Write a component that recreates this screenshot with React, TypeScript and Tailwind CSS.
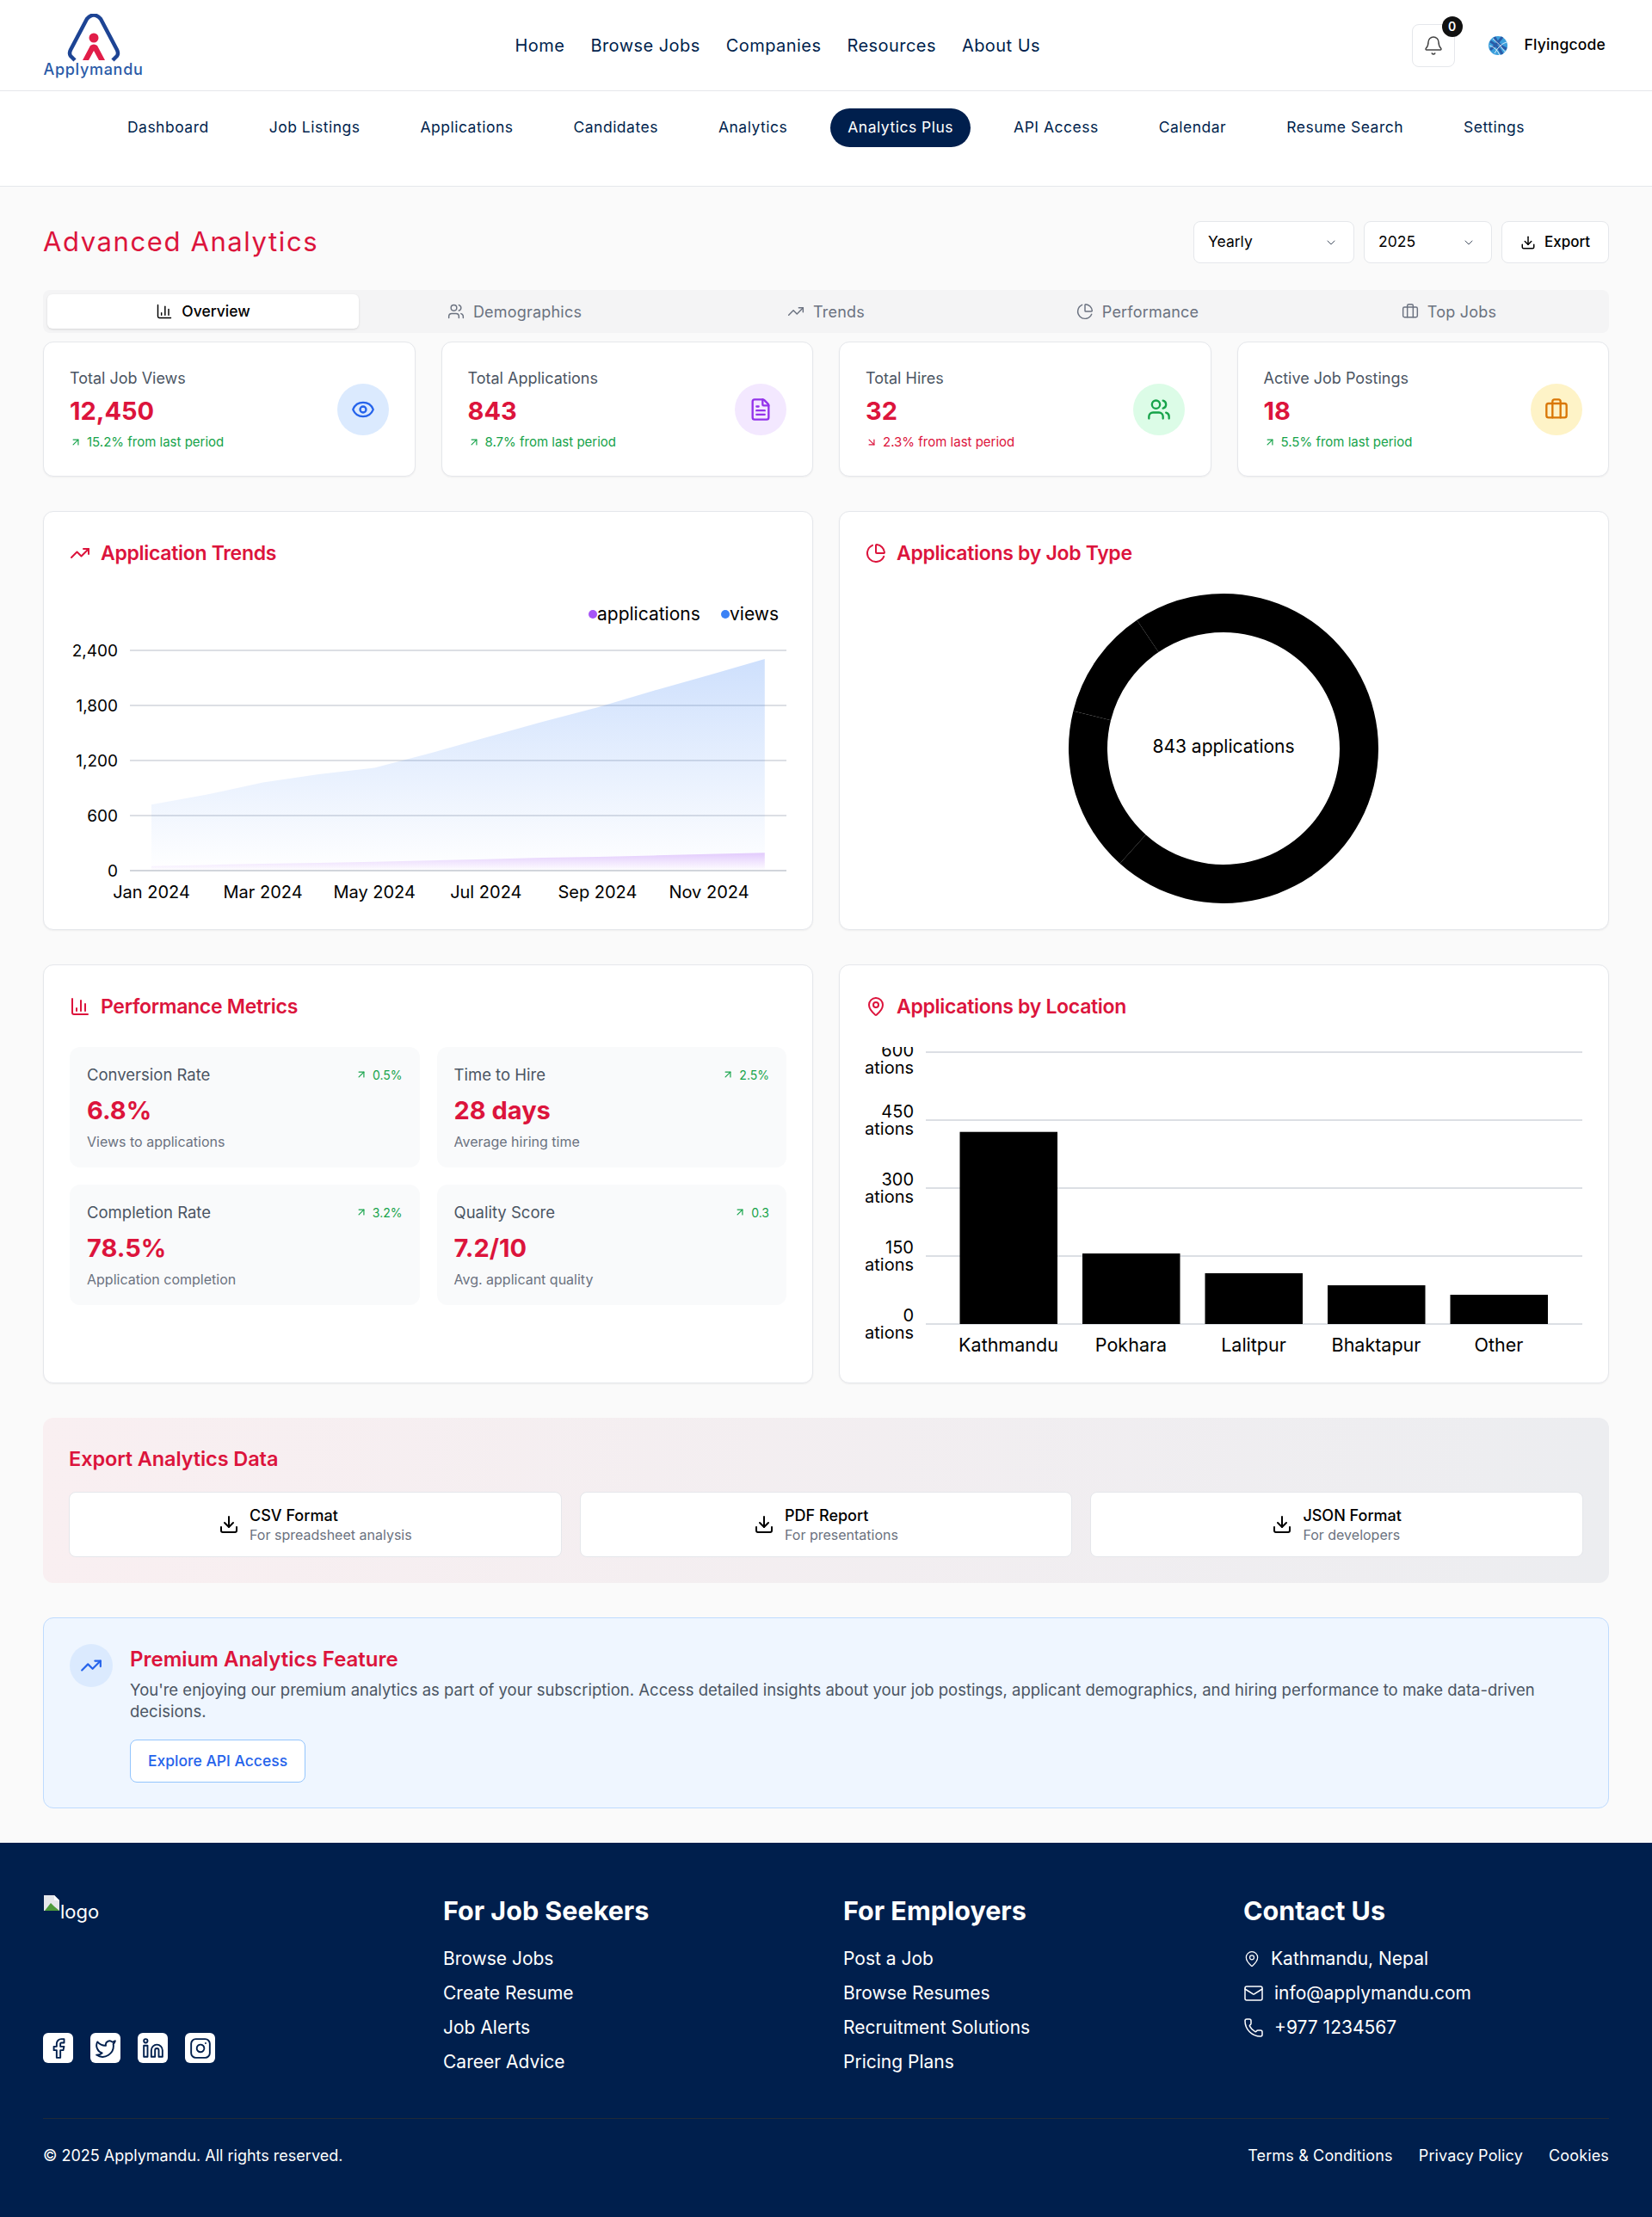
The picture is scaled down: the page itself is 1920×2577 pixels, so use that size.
import {
  ArrowDownRight,
  ArrowUpRight,
  Bell,
  Briefcase,
  ChartColumn,
  ChartPie,
  ChevronDown,
  Download,
  Eye,
  Facebook,
  FileText,
  Instagram,
  Linkedin,
  Mail,
  MapPin,
  Phone,
  TrendingUp,
  Twitter,
  Users,
} from "lucide-react";

const mainNav = ["Home", "Browse Jobs", "Companies", "Resources", "About Us"];
const subNav = [
  "Dashboard",
  "Job Listings",
  "Applications",
  "Candidates",
  "Analytics",
  "Analytics Plus",
  "API Access",
  "Calendar",
  "Resume Search",
  "Settings",
];

const tabs = [
  { label: "Overview", icon: ChartColumn },
  { label: "Demographics", icon: Users },
  { label: "Trends", icon: TrendingUp },
  { label: "Performance", icon: ChartPie },
  { label: "Top Jobs", icon: Briefcase },
];

const stats = [
  { label: "Total Job Views", value: "12,450", change: "15.2% from last period", up: true, icon: Eye, circle: "bg-[#dbeafe]", color: "text-[#2563eb]" },
  { label: "Total Applications", value: "843", change: "8.7% from last period", up: true, icon: FileText, circle: "bg-[#f3e8ff]", color: "text-[#9333ea]" },
  { label: "Total Hires", value: "32", change: "2.3% from last period", up: false, icon: Users, circle: "bg-[#dcfce7]", color: "text-[#16a34a]" },
  { label: "Active Job Postings", value: "18", change: "5.5% from last period", up: true, icon: Briefcase, circle: "bg-[#fef3c7]", color: "text-[#d97706]" },
];

const metrics = [
  { label: "Conversion Rate", change: "0.5%", value: "6.8%", sub: "Views to applications" },
  { label: "Time to Hire", change: "2.5%", value: "28 days", sub: "Average hiring time" },
  { label: "Completion Rate", change: "3.2%", value: "78.5%", sub: "Application completion" },
  { label: "Quality Score", change: "0.3", value: "7.2/10", sub: "Avg. applicant quality" },
];

const exportsList = [
  { title: "CSV Format", sub: "For spreadsheet analysis" },
  { title: "PDF Report", sub: "For presentations" },
  { title: "JSON Format", sub: "For developers" },
];

const footerCols = [
  { title: "For Job Seekers", links: ["Browse Jobs", "Create Resume", "Job Alerts", "Career Advice"] },
  { title: "For Employers", links: ["Post a Job", "Browse Resumes", "Recruitment Solutions", "Pricing Plans"] },
];

const viewsData = [720, 830, 960, 1050, 1120, 1280, 1450, 1620, 1780, 1960, 2130, 2306];
const appsData = [50, 62, 75, 85, 95, 110, 125, 140, 150, 165, 180, 195];
const months = ["Jan 2024", "Mar 2024", "May 2024", "Jul 2024", "Sep 2024", "Nov 2024"];
const locations = [
  { name: "Kathmandu", top: 98.7 },
  { name: "Pokhara", top: 240 },
  { name: "Lalitpur", top: 263 },
  { name: "Bhaktapur", top: 277 },
  { name: "Other", top: 288 },
];

const cardClass = "px-[30px] pt-[30px] bg-white border border-gray-200 rounded-xl shadow-[0_1px_2px_rgba(0,0,0,0.05)]";

function areaPath(data: number[]) {
  const pts = data.map((v, i) => `${95 + i * 64.8},${322 - (v * 64) / 600}`);
  return `M95,322 L${pts.join(" L")} L807.8,322 Z`;
}

function Logo() {
  return (
    <div className="flex flex-col items-center w-[117px]">
      <svg width="62" height="56" viewBox="0 0 62 56">
        <path
          d="M9 54 L4 49 Q2 46 4 42 L23 6 Q31 -3 39 6 L58 42 Q60 46 58 49 L53 54"
          fill="none"
          stroke="#1d4494"
          strokeWidth="4.5"
          strokeLinejoin="round"
        />
        <circle cx="31" cy="28" r="5.5" fill="#e11d48" />
        <path d="M18 54 L27 37 Q31 34 35 37 L44 54 L37 54 L31 43 L25 54 Z" fill="#e11d48" />
      </svg>
      <span className="text-[18px] leading-[18px] tracking-[0.7px] text-[#2a5ba8] font-medium">Applymandu</span>
    </div>
  );
}

function Avatar() {
  return (
    <svg width="24" height="24" viewBox="0 0 24 24">
      <circle cx="12" cy="12" r="11" fill="#3b9fdc" />
      <path d="M3 7 Q12 12 17 22 M8 2 Q12 12 22 16 M17 2 Q12 9 3 17" fill="none" stroke="#2a5ca8" strokeWidth="3" />
      <path d="M6 4 Q14 10 20 19 M2 12 Q10 14 14 23 M22 8 Q14 10 8 21" fill="none" stroke="#ffffff" strokeWidth="0.8" />
    </svg>
  );
}

function Select({ label, width }: { label: string; width: string }) {
  return (
    <div className={`${width} h-[49px] flex items-center justify-between pl-4 pr-[18px] bg-white border border-gray-200 rounded-lg text-[17.5px] text-black`}>
      {label}
      <ChevronDown size={16} className="text-gray-600" strokeWidth={1.5} />
    </div>
  );
}

function CardTitle({ icon: Icon, title }: { icon: typeof Eye; title: string }) {
  return (
    <div className="flex items-center gap-3 h-9 text-[#dc143c]">
      <Icon size={24} strokeWidth={2} />
      <h3 className="text-[23px] font-semibold tracking-[-0.3px]">{title}</h3>
    </div>
  );
}

function TrendsChart() {
  return (
    <svg width="833" height="360" className="mt-[29px] block">
      <defs>
        <linearGradient id="viewsFill" x1="0" y1="0" x2="0" y2="1">
          <stop offset="0%" stopColor="#3b82f6" stopOpacity="0.25" />
          <stop offset="100%" stopColor="#3b82f6" stopOpacity="0" />
        </linearGradient>
        <linearGradient id="appsFill" x1="0" y1="0" x2="0" y2="1">
          <stop offset="0%" stopColor="#a855f7" stopOpacity="0.3" />
          <stop offset="100%" stopColor="#a855f7" stopOpacity="0" />
        </linearGradient>
      </defs>
      <circle cx="608" cy="24" r="5" fill="#a855f7" />
      <text x="613" y="31" fontSize="21" fill="#000">applications</text>
      <circle cx="762" cy="24" r="5" fill="#3b82f6" />
      <text x="767" y="31" fontSize="21" fill="#000">views</text>
      {[66, 130, 194, 258, 322].map((y, i) => (
        <g key={y}>
          <line x1="70" x2="833" y1={y} y2={y} stroke="#d1d5db" strokeWidth={i === 4 ? 2 : 1.5} />
          <text x="56" y={y + 7} fontSize="19" textAnchor="end" fill="#000">
            {["2,400", "1,800", "1,200", "600", "0"][i]}
          </text>
        </g>
      ))}
      <path d={areaPath(viewsData)} fill="url(#viewsFill)" />
      <path d={areaPath(appsData)} fill="url(#appsFill)" />
      {months.map((m, i) => (
        <text key={m} x={95 + i * 129.6} y={354} fontSize="20" textAnchor="middle" fill="#000">
          {m}
        </text>
      ))}
    </svg>
  );
}

// slices meet at these angles, the seams between them show as hairlines
const sliceAngles = [0, 222, 284, 326, 360];

function arcPath(from: number, to: number) {
  const p = (r: number, a: number) => {
    const t = (a * Math.PI) / 180;
    return `${416 + r * Math.sin(t)} ${180 - r * Math.cos(t)}`;
  };
  const large = to - from > 180 ? 1 : 0;
  return `M${p(180, from)} A180 180 0 ${large} 1 ${p(180, to)} L${p(135, to)} A135 135 0 ${large} 0 ${p(135, from)} Z`;
}

function DonutChart() {
  return (
    <svg width="833" height="360" className="mt-[29px] block">
      {sliceAngles.slice(0, -1).map((a, i) => (
        <path key={a} d={arcPath(a, sliceAngles[i + 1])} fill="#000" />
      ))}
      <text x="416" y="185" fontSize="21" textAnchor="middle" fill="#000">843 applications</text>
    </svg>
  );
}

function LocationChart() {
  return (
    <svg width="833" height="360" className="mt-[29px] block">
      {[6, 85, 164, 243, 322].map((y, i) => {
        // the top tick label sits lower than the others in the chart
        const shift = i === 0 ? 8 : 0;
        return (
          <g key={y}>
            <line x1="70" x2="833" y1={y} y2={y} stroke="#d1d5db" strokeWidth="1.5" />
            <text x="56" y={y - 3 + shift} fontSize="20" textAnchor="end" fill="#000">
              {["600", "450", "300", "150", "0"][i]}
            </text>
            <text x="56" y={y + 17 + shift} fontSize="20" textAnchor="end" fill="#000">applications</text>
          </g>
        );
      })}
      {locations.map((l, i) => (
        <g key={l.name}>
          <rect x={109.5 + i * 142.5} y={l.top} width="113.5" height={322 - l.top} fill="#000" />
          <text x={166 + i * 142.5} y={354} fontSize="21.5" textAnchor="middle" fill="#000">{l.name}</text>
        </g>
      ))}
    </svg>
  );
}

export default function App() {
  return (
    <div className="min-h-[2577px] bg-[#fafafa] font-[family-name:Inter,sans-serif]">
      <header className="h-[106px] flex items-center justify-between pl-[50px] pr-[54px] bg-white border-b border-gray-200">
        <Logo />
        <nav className="flex gap-[30px] text-[20px] tracking-[0.45px] text-[#001f4d]">
          {mainNav.map((n) => (
            <span key={n}>{n}</span>
          ))}
        </nav>
        <div className="flex items-center">
          <div className="relative w-[50px] h-[50px] flex items-center justify-center border border-gray-200 rounded-lg bg-white">
            <Bell size={24} strokeWidth={1.5} className="text-[#444]" />
            <span className="absolute right-[-10px] top-[-10px] w-6 h-6 rounded-full bg-[#111] text-white text-[14px] font-semibold flex items-center justify-center">0</span>
          </div>
          <div className="ml-[38px] flex items-center gap-[19px]">
            <Avatar />
            <span className="text-[17.5px] font-medium text-black tracking-[0.2px]">Flyingcode</span>
          </div>
        </div>
      </header>

      <div className="h-[111px] pt-5 flex justify-center gap-[30px] bg-white border-b border-gray-200">
        {subNav.map((n) => (
          <span
            key={n}
            className={
              "h-[45px] px-5 flex items-center rounded-full text-[17.5px] tracking-[0.5px] " +
              (n === "Analytics Plus" ? "bg-[#001f4d] text-white" : "text-[#001f4d]")
            }
          >
            {n}
          </span>
        ))}
      </div>

      <main className="px-[50px] pt-10 pb-10">
        <div className="flex items-center justify-between h-[49px]">
          <h1 className="text-[31px] text-[#dc143c] tracking-[1.6px]">Advanced Analytics</h1>
          <div className="flex gap-[11px]">
            <Select label="Yearly" width="w-[187px]" />
            <Select label="2025" width="w-[149px]" />
            <div className="w-[125px] h-[49px] flex items-center justify-center gap-[10px] bg-white border border-gray-200 rounded-lg text-[17px] font-medium text-black">
              <Download size={18} />
              Export
            </div>
          </div>
        </div>

        <div className="mt-[31px] h-[50px] p-[5px] grid grid-cols-5 bg-[#f4f4f5] rounded-lg">
          {tabs.map((t, i) => (
            <div
              key={t.label}
              className={
                "flex items-center justify-center gap-[10px] rounded-md " +
                (i === 0 ? "bg-white text-black font-medium text-[17.5px] shadow-sm" : "text-[#6b7280] text-[18px] tracking-[0.2px]")
              }
            >
              <t.icon size={20} strokeWidth={1.75} />
              {t.label}
            </div>
          ))}
        </div>

        <div className="mt-[10px] grid grid-cols-4 gap-[30px]">
          {stats.map((s) => (
            <div key={s.label} className="h-[157px] flex items-center justify-between px-[30px] bg-white border border-gray-200 rounded-xl shadow-[0_1px_2px_rgba(0,0,0,0.05)]">
              <div>
                <p className="text-[18px] leading-6 text-[#4b5563]">{s.label}</p>
                <p className="mt-[6px] text-[29px] leading-[40px] font-bold text-[#dc143c]">{s.value}</p>
                <p className={"mt-[6px] flex items-center gap-[6px] text-[15px] leading-5 " + (s.up ? "text-[#16a34a]" : "text-[#dc143c]")}>
                  {s.up ? <ArrowUpRight size={14} /> : <ArrowDownRight size={14} />}
                  {s.change}
                </p>
              </div>
              <div className={`w-[60px] h-[60px] rounded-full flex items-center justify-center ${s.circle} ${s.color}`}>
                <s.icon size={28} strokeWidth={2} />
              </div>
            </div>
          ))}
        </div>

        <div className="mt-10 grid grid-cols-2 gap-[30px]">
          <section className={`h-[487px] ${cardClass}`}>
            <CardTitle icon={TrendingUp} title="Application Trends" />
            <TrendsChart />
          </section>
          <section className={`h-[487px] ${cardClass}`}>
            <CardTitle icon={ChartPie} title="Applications by Job Type" />
            <DonutChart />
          </section>
        </div>

        <div className="mt-10 grid grid-cols-2 gap-[30px]">
          <section className={`h-[487px] ${cardClass}`}>
            <CardTitle icon={ChartColumn} title="Performance Metrics" />
            <div className="mt-[29px] grid grid-cols-2 gap-5">
              {metrics.map((m) => (
                <div key={m.label} className="h-[140px] px-5 pt-[20px] bg-[#f9fafb] rounded-xl">
                  <div className="flex items-center justify-between">
                    <span className="text-[18.5px] leading-6 text-[#4b5563]">{m.label}</span>
                    <span className="flex items-center gap-[6px] text-[14px] text-[#16a34a]">
                      <ArrowUpRight size={14} />
                      {m.change}
                    </span>
                  </div>
                  <p className="mt-[9px] text-[29px] leading-[42px] font-bold text-[#dc143c]">{m.value}</p>
                  <p className="mt-[3px] text-[16px] leading-6 text-[#6b7280]">{m.sub}</p>
                </div>
              ))}
            </div>
          </section>
          <section className={`h-[487px] ${cardClass}`}>
            <CardTitle icon={MapPin} title="Applications by Location" />
            <LocationChart />
          </section>
        </div>

        <section className="mt-10 h-[192px] px-[30px] pt-[30px] rounded-xl bg-gradient-to-r from-[#f9eff1] to-[#ecedf0]">
          <h3 className="text-[23.5px] leading-9 font-semibold tracking-[-0.1px] text-[#dc143c]">Export Analytics Data</h3>
          <div className="mt-5 grid grid-cols-3 gap-[21px]">
            {exportsList.map((e) => (
              <div key={e.title} className="h-[76px] flex items-center justify-center gap-3 bg-white border border-gray-200 rounded-lg">
                <Download size={24} className="text-black" />
                <div>
                  <p className="text-[18px] leading-6 font-medium text-black">{e.title}</p>
                  <p className="text-[16px] leading-5 text-[#6b7280]">{e.sub}</p>
                </div>
              </div>
            ))}
          </div>
        </section>

        <section className="mt-10 h-[222px] flex gap-5 pl-[30px] pt-[30px] bg-[#eff6ff] border border-[#bfdbfe] rounded-xl">
          <div className="w-[50px] h-[50px] shrink-0 rounded-full bg-[#dbeafe] flex items-center justify-center">
            <TrendingUp size={26} className="text-[#2563eb]" />
          </div>
          <div>
            <h3 className="text-[24px] leading-9 font-semibold text-[#dc143c]">Premium Analytics Feature</h3>
            <p className="mt-[5px] text-[18.5px] leading-[25px] text-[#4b5563]">
              You're enjoying our premium analytics as part of your subscription. Access detailed insights about your job postings, applicant demographics, and hiring performance to make data-driven
              <br />
              decisions.
            </p>
            <button className="mt-[20px] w-[204px] h-[50px] bg-white border border-[#93c5fd] rounded-lg text-[17.5px] font-medium text-[#2563eb]">
              Explore API Access
            </button>
          </div>
        </section>
      </main>

      <footer className="h-[435px] px-[50px] pt-[60px] bg-[#001f4d] text-white">
        <div className="h-[260px] grid grid-cols-4 gap-10">
          <div className="flex flex-col justify-between h-[196px]">
            <div className="flex items-start">
              <svg width="20" height="20" viewBox="0 0 20 20">
                <path d="M1 1 H13 L19 7 V19 H1 Z" fill="#e5e7eb" />
                <path d="M2 19 L9 10 L13 14 L19 19 Z" fill="#4d9a3a" />
                <path d="M13 1 V7 H19 Z" fill="#fff" />
              </svg>
              <span className="text-[22px] leading-7 mt-[6px]">logo</span>
            </div>
            <div className="flex gap-5">
              {[Facebook, Twitter, Linkedin, Instagram].map((Icon, i) => (
                <div key={i} className="w-[35px] h-[35px] bg-white rounded-md flex items-center justify-center text-[#001f4d]">
                  <Icon size={26} strokeWidth={1.75} />
                </div>
              ))}
            </div>
          </div>
          {footerCols.map((c) => (
            <div key={c.title}>
              <h4 className="text-[30.5px] leading-[38px] font-bold">{c.title}</h4>
              <ul className="mt-[25px] flex flex-col gap-4 text-[21px] leading-6">
                {c.links.map((l) => (
                  <li key={l}>{l}</li>
                ))}
              </ul>
            </div>
          ))}
          <div>
            <h4 className="text-[30.5px] leading-[38px] font-bold">Contact Us</h4>
            <ul className="mt-[25px] flex flex-col gap-4 text-[21px] leading-6">
              <li className="flex items-center gap-3">
                <MapPin size={20} strokeWidth={1.5} />
                Kathmandu, Nepal
              </li>
              <li className="flex items-center gap-3">
                <Mail size={24} strokeWidth={1.5} />
                info@applymandu.com
              </li>
              <li className="flex items-center gap-3">
                <Phone size={24} strokeWidth={1.5} />
                +977 1234567
              </li>
            </ul>
          </div>
        </div>
        <div className="border-t border-[#1f2937] h-[86px] flex items-center justify-between text-[18px]">
          <span>© 2025 Applymandu. All rights reserved.</span>
          <div className="flex gap-[30px] tracking-[0.15px]">
            <span>Terms &amp; Conditions</span>
            <span>Privacy Policy</span>
            <span>Cookies</span>
          </div>
        </div>
      </footer>
    </div>
  );
}
